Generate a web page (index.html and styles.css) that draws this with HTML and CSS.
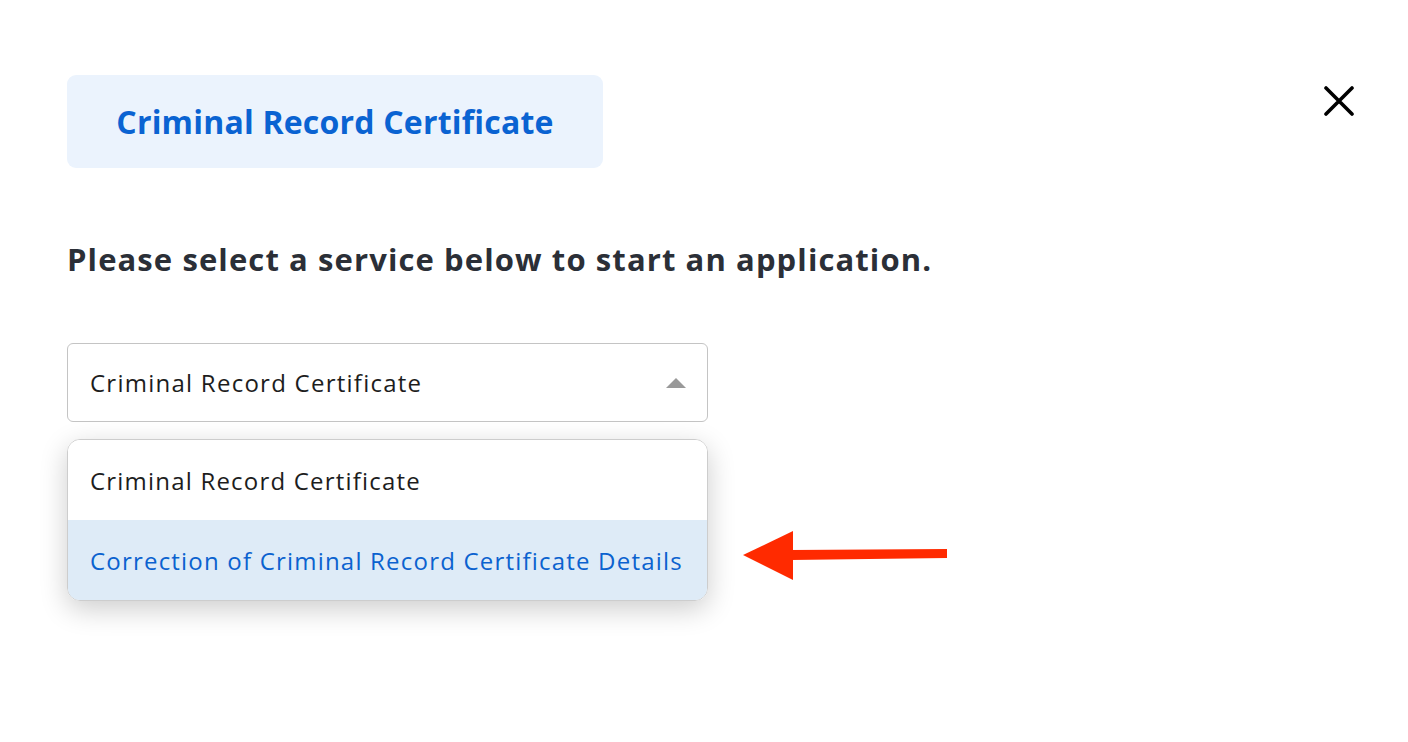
FILE: index.html
```html
<!DOCTYPE html>
<html lang="en">
<head>
<meta charset="utf-8">
<title>Criminal Record Certificate</title>
<link rel="stylesheet" href="styles.css">
</head>
<body>
<div class="page">
  <div class="header">
    <div class="badge">Criminal Record Certificate</div>
    <button class="close" aria-label="Close">
      <svg width="30" height="30" viewBox="0 0 30 30"><path d="M2 2 L28 28 M28 2 L2 28" stroke="#000" stroke-width="3.6" stroke-linecap="round"/></svg>
    </button>
  </div>
  <h2 class="prompt">Please select a service below to start an application.</h2>
  <div class="select-area">
    <div class="select">
      <span>Criminal Record Certificate</span>
      <span class="caret"></span>
    </div>
    <div class="dropdown-row">
      <ul class="menu">
        <li class="option">Criminal Record Certificate</li>
        <li class="option active">Correction of Criminal Record Certificate Details</li>
      </ul>
      <svg class="arrow" width="206" height="52" viewBox="0 0 206 52"><path d="M48 19 L204 18 L204 27 L48 29 Z" fill="#ff2a00"/><polygon points="0,24 50,0 50,49" fill="#ff2a00"/></svg>
    </div>
  </div>
</div>
</body>
</html>
```
FILE: styles.css
```css
* { box-sizing: border-box; }
html, body { margin: 0; padding: 0; background: #fff; }
body { font-family: "Open Sans", "Lato", sans-serif; color: #1f2328; min-height: 742px; }
.page { padding: 75px 54px 140px 67px; }
.header { display: flex; justify-content: space-between; align-items: flex-start; }
.badge {
  width: 536px; height: 93px;
  background: #ebf3fd; border-radius: 9px;
  display: flex; align-items: center; justify-content: center;
  color: #0a63d2; font-weight: 700; font-size: 32px; letter-spacing: 0.2px;
}
.close { border: 0; background: none; padding: 0; margin-top: 11px; width: 30px; height: 30px; cursor: pointer; }
.close svg { display: block; }
.prompt { margin: 71px 0 0; font-size: 31px; line-height: 40px; font-weight: 700; color: #2b2f37; letter-spacing: 1.1px; }
.select-area { margin-top: 64px; width: 641px; }
.select {
  height: 79px; border: 1.5px solid #c4c4c4; border-radius: 6px;
  display: flex; align-items: center; justify-content: space-between;
  padding: 0 21px 0 22px; font-size: 24px; letter-spacing: 1.25px; color: #1d1d1d;
}
.caret { width: 0; height: 0; border-left: 10px solid transparent; border-right: 10px solid transparent; border-bottom: 10px solid #999; }
.dropdown-row { display: flex; align-items: flex-start; margin-top: 17px; width: 900px; gap: 35px; }
.menu {
  list-style: none; margin: 0; padding: 0; width: 641px; flex: none;
  border: 1.5px solid #cdcdcd; border-radius: 13px; overflow: hidden;
  box-shadow: 0 8px 28px rgba(0,0,0,0.2);
}
.option { height: 80px; display: flex; align-items: center; padding: 0 10px 0 22px; font-size: 24px; letter-spacing: 1.2px; white-space: nowrap; color: #1d1d1d; background: #fff; }
.option.active { background: #deebf7; color: #0b62cf; }
.arrow { flex: none; margin-top: 92px; }
```
